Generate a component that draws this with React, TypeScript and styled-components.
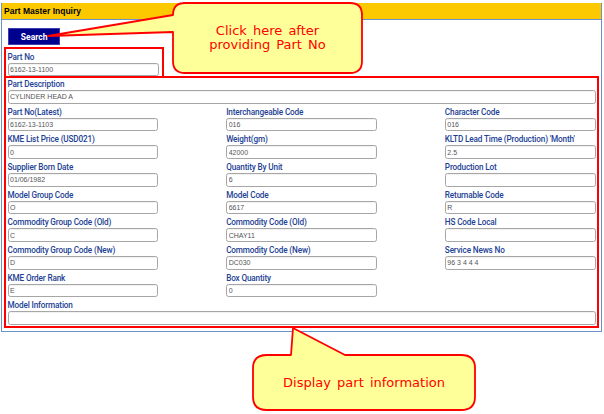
import styled, { createGlobalStyle } from "styled-components";

const GlobalStyle = createGlobalStyle`
  html, body {
    margin: 0;
    padding: 0;
    background: #fff;
  }
`;

const Page = styled.div`
  position: relative;
  width: 604px;
  height: 414px;
  padding: 3px 2px 0 1px;
  box-sizing: border-box;
  overflow: hidden;
  font-family: Roboto, "Liberation Sans", sans-serif;
`;

const Panel = styled.div`
  border: 1px solid #6b93c9;
  border-top: none;
  padding-bottom: 3px;
`;

const PanelHeader = styled.div`
  height: 16px;
  line-height: 16px;
  padding-left: 2px;
  background-color: #fcc900;
  border-bottom: 1px solid #6b93c9;
  font-family: "Liberation Sans", Arial, sans-serif;
  font-size: 8.5px;
  font-weight: 700;
  color: #000;
`;

const SearchButton = styled.button`
  display: block;
  margin: 8.3px 0 0 6.3px;
  width: 51.7px;
  height: 16.7px;
  padding: 0;
  box-sizing: border-box;
  background-color: #00008f;
  border: 1px solid #3d3db0;
  color: #fff;
  font-family: Roboto, "Liberation Sans", sans-serif;
  font-size: 8.5px;
  font-weight: 700;
`;

const PartNoBox = styled.div`
  margin: 2px 0 0 2px;
  width: 160px;
  box-sizing: border-box;
  border: 2px solid #ff0000;
  padding: 2.7px 3px 0 1.5px;
`;

const InfoBox = styled.div`
  margin: -2px 2px 0 2px;
  border: 2px solid #ff0000;
  padding: 1px 1.5px 1px 1.5px;
  display: grid;
  grid-template-columns: repeat(3, 1fr);
  column-gap: 68px;
  row-gap: 3.17px;
`;

const Field = styled.div<{ $full?: boolean }>`
  grid-column: ${(p) => (p.$full ? "1 / -1" : "auto")};
  display: flex;
  flex-direction: column;
`;

const Label = styled.div`
  height: 10px;
  line-height: 10px;
  font-size: 8.2px;
  font-weight: 500;
  letter-spacing: -0.15px;
  color: #233f94;
  white-space: nowrap;
`;

const ValueBox = styled.input.attrs({ readOnly: true, type: "text" })`
  margin: 1px 0 0 0;
  width: 100%;
  height: 13.5px;
  box-sizing: border-box;
  padding: 0 0 0 1.5px;
  border: 1px solid #a6a6a6;
  border-radius: 2.5px;
  background: #fff;
  box-shadow: inset 0 1px 1px rgba(0, 0, 0, 0.06);
  outline: none;
  font-family: "Liberation Sans", Arial, sans-serif;
  font-size: 7px;
  color: #555;
`;

const Callout = styled.div<{ $x: number; $y: number; $w: number; $h: number }>`
  position: absolute;
  left: ${(p) => p.$x}px;
  top: ${(p) => p.$y}px;
  width: ${(p) => p.$w}px;
  height: ${(p) => p.$h}px;
`;

const CalloutShape = styled.svg`
  position: absolute;
  left: 0;
  top: 0;
  overflow: visible;
`;

const CalloutText = styled.div<{ $x: number; $y: number; $w: number; $h: number }>`
  position: absolute;
  left: ${(p) => p.$x}px;
  top: ${(p) => p.$y}px;
  width: ${(p) => p.$w}px;
  height: ${(p) => p.$h}px;
  display: flex;
  align-items: center;
  justify-content: center;
  text-align: center;
  font-family: "DejaVu Sans", sans-serif;
  font-size: 13px;
  line-height: 14px;
  word-spacing: 2px;
  color: #ff0000;
`;

type FieldData = { label: string; value: string; full?: boolean };

const fields: FieldData[] = [
  { label: "Part Description", value: "CYLINDER HEAD A", full: true },
  { label: "Part No(Latest)", value: "6162-13-1103" },
  { label: "Interchangeable Code", value: "016" },
  { label: "Character Code", value: "016" },
  { label: "KME List Price (USD021)", value: "0" },
  { label: "Weight(gm)", value: "42000" },
  { label: "KLTD Lead Time (Production) 'Month'", value: "2.5" },
  { label: "Supplier Born Date", value: "01/06/1982" },
  { label: "Quantity By Unit", value: "6" },
  { label: "Production Lot", value: "" },
  { label: "Model Group Code", value: "O" },
  { label: "Model Code", value: "6617" },
  { label: "Returnable Code", value: "R" },
  { label: "Commodity Group Code (Old)", value: "C" },
  { label: "Commodity Code (Old)", value: "CHAY11" },
  { label: "HS Code Local", value: "" },
  { label: "Commodity Group Code (New)", value: "D" },
  { label: "Commodity Code (New)", value: "DC030" },
  { label: "Service News No", value: "96 3 4 4 4" },
  { label: "KME Order Rank", value: "E" },
  { label: "Box Quantity", value: "0" },
  { label: "Model Information", value: "", full: true },
];

const App = () => {
  return (
    <>
      <GlobalStyle />
      <Page>
        <Panel>
          <PanelHeader>Part Master Inquiry</PanelHeader>
          <SearchButton>Search</SearchButton>

          <PartNoBox>
            <Field>
              <Label>Part No</Label>
              <ValueBox value="6162-13-1100" />
            </Field>
          </PartNoBox>

          <InfoBox>
            {fields.map((f) => (
              <Field key={f.label} $full={f.full}>
                <Label>{f.label}</Label>
                <ValueBox value={f.value} />
              </Field>
            ))}
          </InfoBox>
        </Panel>

        {/* callout pointing at the Search button */}
        <Callout $x={44} $y={0} $w={322} $h={78}>
          <CalloutShape width={322} height={78}>
            <path
              d="M141 3 H306 Q318 3 318 15 V61 Q318 73 306 73 H141 Q129 73 129 61 V32 L4 36 L129 15 Q129 3 141 3 Z"
              fill="#ffff99"
              stroke="#ff0000"
              strokeWidth={1.8}
              strokeLinejoin="round"
            />
          </CalloutShape>
          <CalloutText $x={129} $y={3} $w={189} $h={70}>
            Click here after
            <br />
            providing Part No
          </CalloutText>
        </Callout>

        {/* callout pointing at the info area */}
        <Callout $x={250} $y={326} $w={228} $h={88}>
          <CalloutShape width={228} height={88}>
            <path
              d="M17 29 H41 L43 2 L95 29 H211 Q225 29 225 42 V71 Q225 84 211 84 H17 Q3 84 3 71 V42 Q3 29 17 29 Z"
              fill="#ffff99"
              stroke="#ff0000"
              strokeWidth={1.8}
              strokeLinejoin="round"
            />
          </CalloutShape>
          <CalloutText $x={3} $y={29} $w={222} $h={55}>
            Display part information
          </CalloutText>
        </Callout>
      </Page>
    </>
  );
};

export default App;
